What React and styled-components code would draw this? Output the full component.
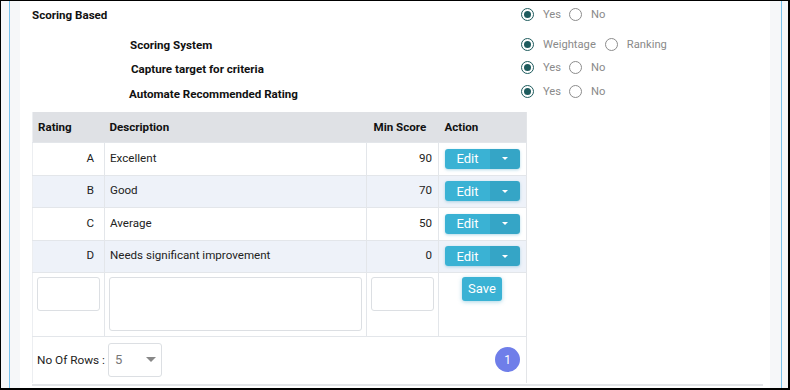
import React from 'react';
import styled, { createGlobalStyle } from 'styled-components';

const Global = createGlobalStyle`
  html, body { margin: 0; padding: 0; background: #fff; }
  body { font-family: Roboto, "Liberation Sans", Arial, sans-serif; }
  * { box-sizing: border-box; }
`;

const Frame = styled.div`
  width: 790px;
  height: 390px;
  border: 1px solid #000;
  border-bottom-width: 2px;
  border-right-width: 2px;
  display: flex;
  overflow: hidden;
  background: #fff;
`;

const Gutter = styled.div`
  width: ${p => p.$w}px;
  flex: none;
  background: #f6f7f9;
  display: flex;
  padding-left: ${p => p.$rail}px;
`;

const Rail = styled.div`
  width: 1px;
  background: #79c2ec;
`;

const Main = styled.div`
  flex: 1;
  padding-left: 12px;
  background: #fff;
`;

const Section = styled.div`
  width: 731px;
  height: 385px;
  border-bottom: 2px solid #e3e5e8;
`;

const Settings = styled.div`
  display: flex;
  flex-direction: column;
`;

const SettingRow = styled.div`
  display: flex;
  align-items: center;
  height: 16px;
  margin-top: ${p => p.$top}px;
`;

const Label = styled.div`
  width: 489px;
  padding-left: ${p => p.$indent}px;
  font-size: 11.6px;
  font-weight: 700;
  color: #111;
  position: relative;
  top: ${p => p.$shift || 0}px;
`;

const Options = styled.div`
  display: flex;
  align-items: center;
`;

const Option = styled.label`
  display: flex;
  align-items: center;
  font-size: 11.2px;
  color: #8a8a8a;
  margin-right: ${p => p.$gap}px;
`;

const Radio = styled.span`
  width: 13px;
  height: 13px;
  border-radius: 50%;
  margin-right: 9px;
  border: 1px solid ${p => (p.$on ? '#1e5b5d' : '#8c8c8c')};
  display: flex;
  align-items: center;
  justify-content: center;
  &::after {
    content: '';
    width: 7px;
    height: 7px;
    border-radius: 50%;
    background: ${p => (p.$on ? '#1e5b5d' : 'transparent')};
  }
`;

const Table = styled.table`
  margin-top: 13px;
  width: 494px;
  border-collapse: collapse;
  font-size: 11.6px;
  color: #222;
  border-left: 1px solid #eceef1;
  border-right: 1px solid #e3e5e8;
`;

const Th = styled.th`
  height: 30px;
  background: #dfe1e5;
  text-align: left;
  font-weight: 700;
  font-size: 11.6px;
  color: #111;
  padding: 0 0 0 ${p => p.$pl}px;
  width: ${p => p.$w}px;
`;

const Tr = styled.tr`
  background: ${p => (p.$alt ? '#eef2f9' : '#fff')};
  border-top: 1px solid #e3e6ea;
`;

const Td = styled.td`
  height: ${p => p.$h || 32}px;
  border-left: 1px solid #e3e6ea;
  text-align: ${p => p.$align || 'left'};
  padding: ${p => p.$pad || '0 5px 2px'};
  vertical-align: ${p => p.$valign || 'middle'};
  &:first-child { border-left: none; }
`;

const Split = styled.div`
  display: flex;
  width: 75px;
  height: 20px;
  border-radius: 3px;
  overflow: hidden;
  box-shadow: 0 1px 3px rgba(40, 150, 190, 0.35);
`;

const SplitMain = styled.button`
  width: 45px;
  border: none;
  background: #3ab2d4;
  color: #fff;
  font: 400 13px Roboto, "Liberation Sans", sans-serif;
  padding: 0;
`;

const SplitCaret = styled.button`
  flex: 1;
  border: none;
  background: #35a5c6;
  padding: 0;
  display: flex;
  align-items: center;
  justify-content: center;
  &::after {
    content: '';
    border-left: 3.5px solid transparent;
    border-right: 3.5px solid transparent;
    border-top: 3.5px solid #fff;
  }
`;

const Field = styled.input`
  display: block;
  width: ${p => p.$w}px;
  height: 34px;
  border: 1px solid #dcdfe3;
  border-radius: 3px;
  background: #fff;
`;

const Area = styled.textarea`
  display: block;
  width: 253px;
  height: 54px;
  border: 1px solid #dcdfe3;
  border-radius: 3px;
  resize: none;
`;

const SaveButton = styled.button`
  margin-left: 23px;
  width: 40px;
  height: 24px;
  border: none;
  border-radius: 3px;
  background: #3ab2d4;
  color: #fff;
  font: 400 13px Roboto, "Liberation Sans", sans-serif;
  padding: 0;
  box-shadow: 0 1px 4px rgba(40, 150, 190, 0.4);
`;

const Footer = styled.div`
  display: flex;
  align-items: center;
  justify-content: space-between;
  height: 46px;
  padding: 0 6px 0 4px;
`;

const RowsPick = styled.div`
  display: flex;
  align-items: center;
  font-size: 11.8px;
  color: #222;
`;

const Select = styled.div`
  margin-left: 3px;
  width: 54px;
  height: 34px;
  border: 1px solid #dcdfe3;
  border-radius: 3px;
  display: flex;
  align-items: center;
  justify-content: space-between;
  padding: 0 5px 0 6px;
  color: #777;
  font-size: 13px;
  &::after {
    content: '';
    border-left: 5px solid transparent;
    border-right: 5px solid transparent;
    border-top: 5px solid #888;
  }
`;

const Page = styled.div`
  width: 25px;
  height: 25px;
  border-radius: 50%;
  background: #6f7ee9;
  color: #fff;
  font-size: 12px;
  display: flex;
  align-items: center;
  justify-content: center;
`;

const RadioGroup = ({ items, on = 0, gap = 8 }) => (
  <Options>
    {items.map((t, i) => (
      <Option key={t} $gap={gap}>
        <Radio $on={i === on} />
        {t}
      </Option>
    ))}
  </Options>
);

const ratings = [
  { r: 'A', d: 'Excellent', s: 90 },
  { r: 'B', d: 'Good', s: 70 },
  { r: 'C', d: 'Average', s: 50 },
  { r: 'D', d: 'Needs significant improvement', s: 0 }
];

export default function App() {
  return (
    <>
      <Global />
      <Frame>
        <Gutter $w={19} $rail={8}><Rail /></Gutter>
        <Main>
          <Section>
            <Settings>
              <SettingRow $top={5}>
                <Label $indent={0} $shift={1}>Scoring Based</Label>
                <RadioGroup items={['Yes', 'No']} />
              </SettingRow>
              <SettingRow $top={14}>
                <Label $indent={98} $shift={1}>Scoring System</Label>
                <RadioGroup items={['Weightage', 'Ranking']} gap={9} />
              </SettingRow>
              <SettingRow $top={7}>
                <Label $indent={99} $shift={2}>Capture target for criteria</Label>
                <RadioGroup items={['Yes', 'No']} />
              </SettingRow>
              <SettingRow $top={8}>
                <Label $indent={97} $shift={3}>Automate Recommended Rating</Label>
                <RadioGroup items={['Yes', 'No']} />
              </SettingRow>
            </Settings>
            <Table>
              <thead>
                <tr>
                  <Th $w={72} $pl={5}>Rating</Th>
                  <Th $w={261} $pl={5}>Description</Th>
                  <Th $w={72} $pl={7}>Min Score</Th>
                  <Th $w={89} $pl={6}>Action</Th>
                </tr>
              </thead>
              <tbody>
                {ratings.map((row, i) => (
                  <Tr key={row.r} $alt={i % 2 === 1}>
                    <Td $align="right" $pad="0 10px 2px 0" $h={i % 2 ? 32 : 33}>{row.r}</Td>
                    <Td>{row.d}</Td>
                    <Td $align="right" $pad="0 6px 2px 0">{row.s}</Td>
                    <Td $pad="0 6px">
                      <Split>
                        <SplitMain>Edit</SplitMain>
                        <SplitCaret />
                      </Split>
                    </Td>
                  </Tr>
                ))}
                <Tr>
                  <Td $h={64} $pad="4px 4px" $valign="top"><Field $w={63} /></Td>
                  <Td $pad="4px 4px" $valign="top"><Area /></Td>
                  <Td $pad="4px 4px" $valign="top"><Field $w={63} /></Td>
                  <Td $pad="4px 0" $valign="top"><SaveButton>Save</SaveButton></Td>
                </Tr>
                <Tr>
                  <Td colSpan={4} $pad="0">
                    <Footer>
                      <RowsPick>
                        No Of Rows :
                        <Select>5</Select>
                      </RowsPick>
                      <Page>1</Page>
                    </Footer>
                  </Td>
                </Tr>
              </tbody>
            </Table>
          </Section>
        </Main>
        <Gutter $w={18} $rail={11}><Rail /></Gutter>
      </Frame>
    </>
  );
}
